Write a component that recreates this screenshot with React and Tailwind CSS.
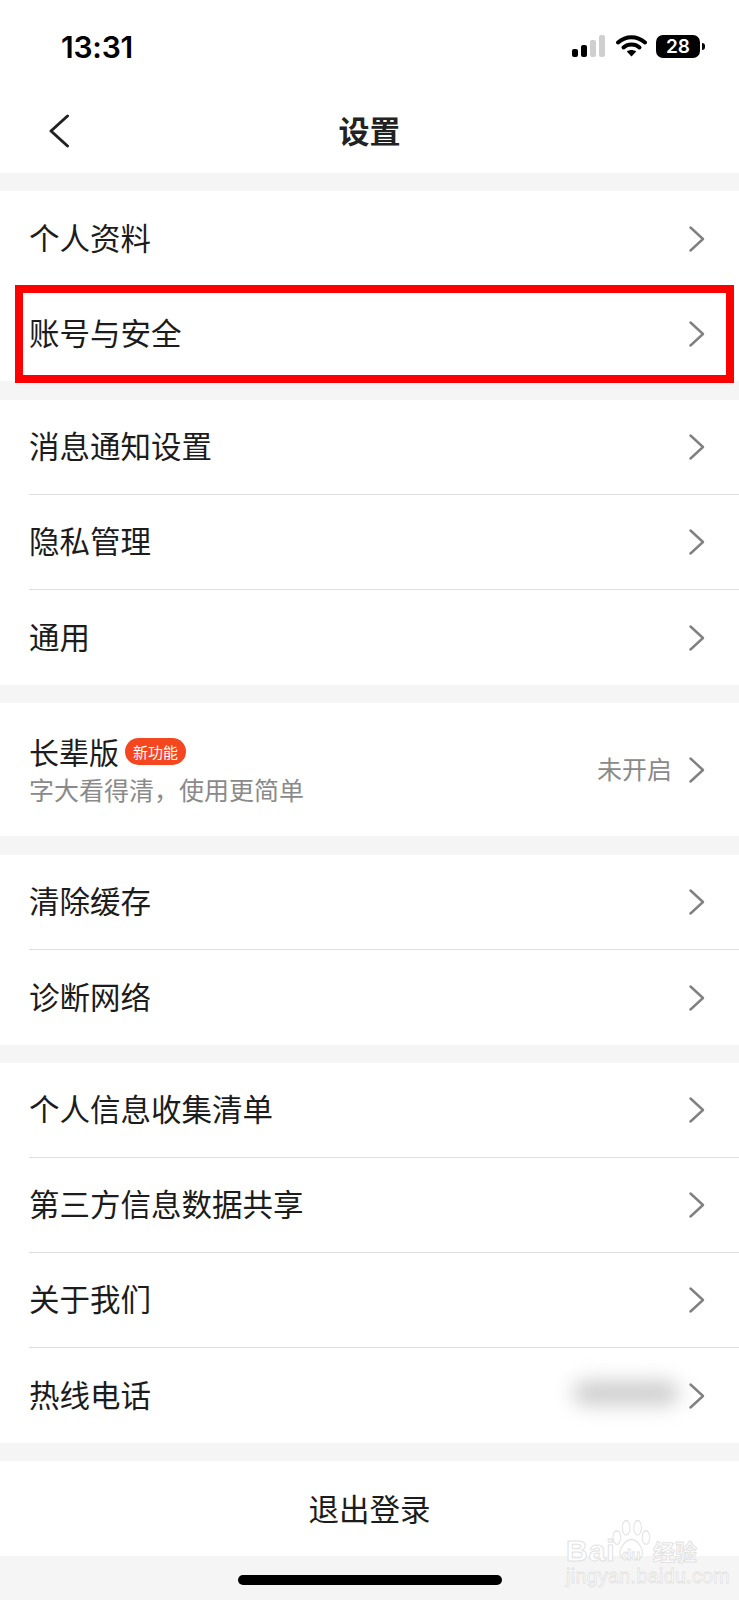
const CJK = "font-['Noto_Sans_CJK_SC','Noto_Sans',sans-serif]";

const groups = [
  { className: "mt-[18px]", rows: ["个人资料", "账号与安全"], noDivider: true },
  { className: "mt-[19px]", rows: ["消息通知设置", "隐私管理", "通用"] },
];

const lowerGroups = [
  { className: "mt-[19px]", rows: ["清除缓存", "诊断网络"] },
  { className: "mt-[18px]", rows: ["个人信息收集清单", "第三方信息数据共享", "关于我们", "热线电话"] },
];

function Chevron() {
  return (
    <svg width="16" height="26" viewBox="0 0 16 26" fill="none" className="shrink-0">
      <path d="M1.5 1.5 L14 13 L1.5 24.5" stroke="#808080" strokeWidth="2.4" strokeLinecap="round" strokeLinejoin="round" />
    </svg>
  );
}

function Row({ label, last }) {
  return (
    <div className="pl-[29px]">
      <div className={`relative h-[95px] flex items-center justify-between pr-[34px] ${last ? "" : "border-b border-[#dedede]"}`}>
        <span className="text-[30.5px] leading-none pb-[3px] text-[#1c1c1c]">{label}</span>
        {label === "热线电话" && (
          <div className="absolute right-[60px] top-[33px] w-[106px] h-[24px] bg-[#cccccc] rounded-full blur-[10px]" />
        )}
        <Chevron />
      </div>
    </div>
  );
}

function Group({ className, rows, noDivider }) {
  return (
    <div className={`bg-white ${className}`}>
      {rows.map((r, i) => (
        <Row key={r} label={r} last={noDivider || i === rows.length - 1} />
      ))}
    </div>
  );
}

function StatusBar() {
  return (
    <div className="h-[88px] flex items-start justify-between pt-[30px] pl-[61px] pr-[34px]">
      <span className="font-['Inter',sans-serif] text-[30px] leading-[34px] font-semibold text-black tracking-[-0.2px]">13:31</span>
      <div className="flex items-start pt-[5px]">
        <div className="flex items-end gap-[3px] h-[22px] mr-[11px]">
          <div className="w-[6px] h-[8px] rounded-[2px] bg-black" />
          <div className="w-[6px] h-[12px] rounded-[2px] bg-black" />
          <div className="w-[6px] h-[17px] rounded-[2px] bg-[#cfcfcf]" />
          <div className="w-[6px] h-[22px] rounded-[2px] bg-[#cfcfcf]" />
        </div>
        <svg width="31" height="22" viewBox="0 0 31 22" fill="none" className="mr-[9px]">
          <path d="M2 7.5 C10 0.5 21 0.5 29 7.5" stroke="black" strokeWidth="4" strokeLinecap="round" />
          <path d="M7.5 12.5 C12 8.6 19 8.6 23.5 12.5" stroke="black" strokeWidth="4" strokeLinecap="round" />
          <path d="M15.5 21.5 L10.8 16.6 C13.5 14.6 17.5 14.6 20.2 16.6 Z" fill="black" />
        </svg>
        <div className="flex items-center gap-[2px]">
          <div className="w-[44px] h-[23px] rounded-[7px] bg-black flex items-center justify-center font-['Inter',sans-serif] text-[19px] leading-none font-semibold text-white">28</div>
          <div className="w-[3px] h-[7px] rounded-r-[3px] bg-black" />
        </div>
      </div>
    </div>
  );
}

function Watermark() {
  return (
    <div className="absolute left-[566px] top-[1518px] w-[136px] h-[68px] font-['Liberation_Sans',sans-serif] text-white">
      <svg width="46" height="45" viewBox="0 0 60 46" preserveAspectRatio="none" fill="none" className="absolute left-[44px] top-0" stroke="#e4e4e4" strokeWidth="1.4">
        <ellipse cx="9" cy="20" rx="5" ry="7" />
        <ellipse cx="21" cy="10" rx="5" ry="7.5" />
        <ellipse cx="36" cy="10" rx="5" ry="7.5" />
        <ellipse cx="47" cy="20" rx="5" ry="7" />
        <path d="M28 22 C36 22 44 32 42 38 C40 43 32 42 28 41 C22 42 14 43 13 37 C12 31 20 22 28 22 Z" />
      </svg>
      <span className="absolute left-0 top-[18px] text-[30px] leading-none font-bold tracking-[1px] [-webkit-text-stroke:1px_#e2e2e2]">Bai</span>
      <span className="absolute left-[56px] top-[29px] text-[15px] leading-none font-bold [-webkit-text-stroke:0.8px_#e2e2e2]">du</span>
      <span className={`absolute left-[87px] top-[21px] text-[22px] leading-none font-bold [-webkit-text-stroke:1px_#e2e2e2] ${CJK}`}>经验</span>
      <span className="absolute left-0 top-[49px] text-[19.5px] leading-none tracking-[0.4px] [-webkit-text-stroke:0.8px_#e2e2e2]">jingyan.baidu.com</span>
    </div>
  );
}

export default function App() {
  return (
    <div className={`relative h-[1600px] w-full overflow-hidden bg-[#f5f5f5] ${CJK}`}>
      <div className="bg-white h-[173px]">
        <StatusBar />
        <div className="relative h-[85px] flex items-start justify-center pt-[22px]">
          <svg width="22" height="34" viewBox="0 0 22 34" fill="none" className="absolute left-[48px] top-[26px]">
            <path d="M19.5 2 L3 17 L19.5 32" stroke="#222222" strokeWidth="3" strokeLinecap="round" strokeLinejoin="round" />
          </svg>
          <span className="text-[31px] leading-[40px] font-bold text-[#222222]">设置</span>
        </div>
      </div>

      {groups.map((g, i) => (
        <Group key={i} {...g} />
      ))}

      <div className="bg-white mt-[18px] h-[133px] pl-[29px] pr-[34px] flex items-center justify-between">
        <div className="flex flex-col gap-[3px] pb-[4px]">
          <div className="flex items-center gap-[6px]">
            <span className="text-[30px] leading-[40px] text-[#1c1c1c]">长辈版</span>
            <span className="w-[61px] h-[27px] rounded-full bg-[#f4471f] text-white text-[15px] leading-[27px] text-center">新功能</span>
          </div>
          <span className="text-[25px] leading-[30px] text-[#8a8a8a]">字大看得清，使用更简单</span>
        </div>
        <div className="flex items-center gap-[17px]">
          <span className="text-[25px] leading-none pb-[3px] text-[#8a8a8a]">未开启</span>
          <Chevron />
        </div>
      </div>

      {lowerGroups.map((g, i) => (
        <Group key={i} {...g} />
      ))}

      <div className="bg-white mt-[18px] h-[95px] flex items-center justify-center">
        <span className="text-[30.5px] leading-none pb-[1px] text-[#1c1c1c]">退出登录</span>
      </div>

      <div className="absolute left-[238px] top-[1575px] w-[264px] h-[10px] rounded-full bg-black" />
      <Watermark />
      <div className="absolute left-[15px] top-[285px] w-[719px] h-[98px] border-[8px] border-[#ff0000]" />
    </div>
  );
}
